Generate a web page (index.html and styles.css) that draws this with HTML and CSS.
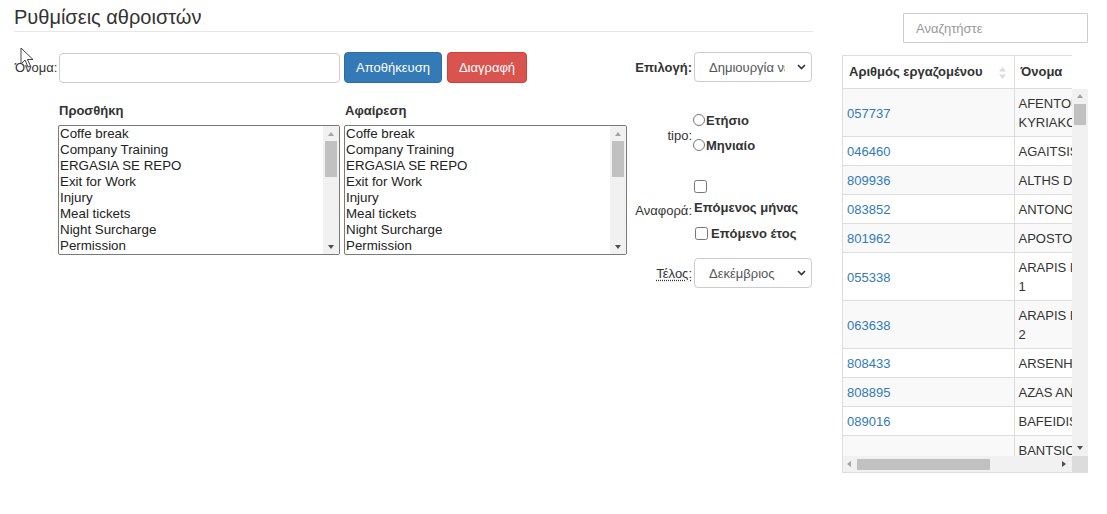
FILE: index.html
```html
<!DOCTYPE html>
<html lang="el">
<head>
<meta charset="utf-8">
<title>Ρυθμίσεις αθροιστών</title>
<link rel="stylesheet" href="styles.css">
</head>
<body>
<div class="page">
  <main class="main">
    <h1 class="title">Ρυθμίσεις αθροιστών</h1>
    <div class="content">
      <div class="left">
        <div class="name-row">
          <label class="name-label" for="name">Όνομα:</label>
          <input id="name" class="text-input" type="text">
          <button class="btn btn-primary">Αποθήκευση</button>
          <button class="btn btn-danger">Διαγραφή</button>
        </div>
        <div class="lists">
          <div class="list-group">
            <div class="list-title">Προσθήκη</div>
            <div class="listbox">
              <div class="list-items">
                <div>Coffe break</div>
                <div>Company Training</div>
                <div>ERGASIA SE REPO</div>
                <div>Exit for Work</div>
                <div>Injury</div>
                <div>Meal tickets</div>
                <div>Night Surcharge</div>
                <div>Permission</div>
              </div>
              <div class="list-scroll">
                <span class="arr arr-up"></span>
                <span class="list-thumb"></span>
                <span class="arr arr-down"></span>
              </div>
            </div>
          </div>
          <div class="list-group">
            <div class="list-title">Αφαίρεση</div>
            <div class="listbox wide">
              <div class="list-items">
                <div>Coffe break</div>
                <div>Company Training</div>
                <div>ERGASIA SE REPO</div>
                <div>Exit for Work</div>
                <div>Injury</div>
                <div>Meal tickets</div>
                <div>Night Surcharge</div>
                <div>Permission</div>
              </div>
              <div class="list-scroll">
                <span class="arr arr-up"></span>
                <span class="list-thumb"></span>
                <span class="arr arr-down"></span>
              </div>
            </div>
          </div>
        </div>
      </div>
      <div class="right">
        <div class="field">
          <label class="field-label bold">Επιλογή:</label>
          <div class="select-wrap">
            <select class="select"><option>Δημιουργία νέου</option></select>
            <svg class="chev" width="9" height="6" viewBox="0 0 9 6"><path d="M1 1l3.5 3.5L8 1" fill="none" stroke="#333" stroke-width="1.6"/></svg>
          </div>
        </div>
        <div class="field field-tipo">
          <span class="field-label">tipo:</span>
          <div class="radios">
            <label class="radio"><input type="radio" name="tipo">Ετήσιο</label>
            <label class="radio second"><input type="radio" name="tipo">Μηνιαίο</label>
          </div>
        </div>
        <div class="field field-ref">
          <span class="field-label">Αναφορά:</span>
          <div class="checks">
            <label class="check stacked"><input type="checkbox"><span>Επόμενος μήνας</span></label>
            <label class="check inline"><input type="checkbox"><span>Επόμενο έτος</span></label>
          </div>
        </div>
        <div class="field field-end">
          <abbr class="field-label" title="Τέλος">Τέλος:</abbr>
          <div class="select-wrap">
            <select class="select"><option>Δεκέμβριος</option></select>
            <svg class="chev" width="9" height="6" viewBox="0 0 9 6"><path d="M1 1l3.5 3.5L8 1" fill="none" stroke="#333" stroke-width="1.6"/></svg>
          </div>
        </div>
      </div>
    </div>
  </main>

  <aside class="side">
    <input class="search" type="search" placeholder="Αναζητήστε">
    <div class="grid">
      <div class="grid-head">
        <table class="tbl">
          <colgroup><col class="c1"><col class="c2"></colgroup>
          <thead>
            <tr>
              <th>
                <span>Αριθμός εργαζομένου</span>
                <svg class="sort" width="7" height="12" viewBox="0 0 7 12"><path d="M3.5 0L7 4.5H0z" fill="#dcdcdc"/><path d="M3.5 12L7 7.5H0z" fill="#dcdcdc"/></svg>
              </th>
              <th>Όνομα</th>
            </tr>
          </thead>
        </table>
      </div>
      <div class="grid-body">
        <div class="clip">
          <table class="tbl">
            <colgroup><col class="c1"><col class="c2"></colgroup>
            <tbody>
              <tr><td><a href="#">057737</a></td><td>AFENTOULIS<br>KYRIAKOS</td></tr>
              <tr><td><a href="#">046460</a></td><td>AGAITSIS GEORGIOS</td></tr>
              <tr><td><a href="#">809936</a></td><td>ALTHS DIMITRIOS</td></tr>
              <tr><td><a href="#">083852</a></td><td>ANTONOPOULOS NIKOS</td></tr>
              <tr><td><a href="#">801962</a></td><td>APOSTOLOU MARIA</td></tr>
              <tr><td><a href="#">055338</a></td><td>ARAPIS IOANNIS<br>1</td></tr>
              <tr><td><a href="#">063638</a></td><td>ARAPIS IOANNIS<br>2</td></tr>
              <tr><td><a href="#">808433</a></td><td>ARSENHS PETROS</td></tr>
              <tr><td><a href="#">808895</a></td><td>AZAS ANDREAS</td></tr>
              <tr><td><a href="#">089016</a></td><td>BAFEIDIS KOSTAS</td></tr>
              <tr><td><a href="#"></a></td><td>BANTSIOS<br>ELENI</td></tr>
            </tbody>
          </table>
        </div>
        <div class="vscroll">
          <span class="arr arr-up"></span>
          <span class="vthumb"></span>
          <span class="arr arr-down"></span>
        </div>
      </div>
      <div class="grid-foot">
        <div class="hscroll">
          <span class="arr arr-left"></span>
          <span class="hthumb"></span>
          <span class="arr arr-right"></span>
        </div>
        <div class="corner"></div>
      </div>
    </div>
  </aside>
</div>

<svg class="cursor" width="14" height="22" viewBox="0 0 14 22"><path d="M1 1v16l4-4 3 7 2.5-1-3-6.5H13z" fill="#fff" stroke="#444" stroke-width="1" stroke-linejoin="round"/></svg>
</body>
</html>
```
FILE: styles.css
```css
* { box-sizing: border-box; }

body {
  margin: 0;
  font-family: "Liberation Sans", Arial, sans-serif;
  font-size: 13px;
  color: #333;
  background: #fff;
}

.page {
  display: flex;
  align-items: flex-start;
  gap: 29px;
  padding-left: 14px;
}

.main { width: 799px; flex: none; }

.title {
  margin: 0;
  padding: 6px 0 3px;
  font-size: 20px;
  font-weight: normal;
  line-height: 22px;
  color: #333;
  border-bottom: 1px solid #e8e8e8;
}

.content {
  display: flex;
  margin-top: 20px;
}

.left { width: 616px; flex: none; }
.right { width: 183px; flex: none; }

/* name row */
.name-row {
  display: flex;
  align-items: center;
  height: 31px;
}

.name-label {
  width: 45px;
  padding-left: 1px;
  font-size: 13px;
}

.text-input {
  width: 281px;
  height: 30px;
  border: 1px solid #ccc;
  border-radius: 4px;
  font-family: inherit;
}

.btn {
  height: 31px;
  border-radius: 4px;
  color: #fff;
  font-family: inherit;
  font-size: 13px;
  padding: 0;
}

.btn-primary {
  width: 98px;
  margin-left: 4px;
  background: #337ab7;
  border: 1px solid #2e6da4;
}

.btn-danger {
  width: 80px;
  margin-left: 5px;
  background: #d9534f;
  border: 1px solid #d43f3a;
}

/* lists */
.lists {
  display: flex;
  gap: 4px;
  margin-left: 44px;
  margin-top: 20px;
}

.list-title {
  font-weight: bold;
  line-height: 16px;
  padding-left: 1px;
  margin-bottom: 6px;
}

.listbox {
  display: flex;
  width: 282px;
  height: 130px;
  border: 1px solid #7a7a7a;
  border-radius: 2px;
  overflow: hidden;
}

.listbox.wide { width: 283px; }

.list-items {
  flex: 1;
  padding-left: 1px;
  font-size: 13.33px;
  line-height: 16px;
  color: #222;
}

.list-scroll {
  width: 16px;
  background: #f1f1f1;
  display: flex;
  flex-direction: column;
  align-items: center;
}

.list-thumb {
  width: 12px;
  height: 36px;
  margin-top: 1px;
  background: #c1c1c1;
}

.arr {
  display: block;
  width: 0;
  height: 0;
  border-style: solid;
  border-color: transparent;
}

.arr-up {
  margin: 6px 0 4px;
  border-width: 0 3.5px 4px;
  border-bottom-color: #a3a3a3;
}

.arr-down {
  margin-top: auto;
  margin-bottom: 5px;
  border-width: 4px 3.5px 0;
  border-top-color: #505050;
}

.arr-left {
  border-width: 3.5px 4px 3.5px 0;
  border-right-color: #a3a3a3;
}

.arr-right {
  border-width: 3.5px 0 3.5px 4px;
  border-left-color: #505050;
}

/* right fields */
.field {
  display: flex;
  align-items: center;
}

.field-label {
  width: 63px;
  padding-right: 1px;
  text-align: right;
  font-size: 13px;
  flex: none;
}

.bold { font-weight: bold; }

abbr.field-label {
  text-decoration: underline dotted;
  text-underline-offset: 2px;
  cursor: help;
}

.select-wrap {
  position: relative;
  width: 118px;
  height: 30px;
  margin-left: 1px;
  flex: none;
}

.select {
  appearance: none;
  -webkit-appearance: none;
  width: 100%;
  height: 100%;
  padding: 0 26px 0 14px;
  border: 1px solid #ccc;
  border-radius: 4px;
  background: #fff;
  color: #555;
  font-family: inherit;
  font-size: 13px;
}

.chev {
  position: absolute;
  right: 6px;
  top: 12px;
  pointer-events: none;
}

.field-tipo { margin-top: 30px; }
.field-tipo .field-label { padding-top: 4px; }

.radios {
  display: flex;
  flex-direction: column;
  margin-left: 0;
}

.radio {
  display: block;
  line-height: 18px;
  font-weight: bold;
}

.radio.second { margin-top: 7px; }

.radio input {
  width: 12px;
  height: 12px;
  margin: 0 1px 0 0;
  vertical-align: -1px;
}

.field-ref { margin-top: 21px; }

.checks { margin-left: 1px; }

.check {
  display: block;
  font-weight: bold;
  line-height: 21px;
}

.check input {
  width: 13px;
  height: 13px;
  margin: 0;
  vertical-align: -2px;
}

.check.stacked span { display: block; }

.check.inline { margin-top: 5px; }

.check.inline input { margin: 0 3px 0 1px; }

.field-end { margin-top: 14px; }

/* side table */
.side { width: 246px; flex: none; }

.search {
  display: block;
  width: 185px;
  height: 30px;
  margin: 13px 0 0 61px;
  padding: 0 12px;
  border: 1px solid #ccc;
  border-radius: 1px;
  font-family: inherit;
  font-size: 13px;
}

.search::placeholder { color: #999; }

.grid {
  margin-top: 12px;
  border-left: 1px solid #ddd;
  border-bottom: 1px solid #ddd;
}

.grid-head {
  width: 229px;
  overflow: hidden;
}

.tbl {
  border-collapse: collapse;
  table-layout: fixed;
  width: 400px;
}

.c1 { width: 171px; }
.c2 { width: 229px; }

.tbl th {
  position: relative;
  text-align: left;
  font-weight: bold;
  line-height: 18px;
  padding: 7px 7px 7px 6px;
  border-top: 1px solid #ddd;
  border-bottom: 1px solid #ddd;
  border-right: 1px solid #ddd;
  white-space: nowrap;
}

.sort {
  position: absolute;
  right: 8px;
  top: 11px;
}

.grid-body {
  display: flex;
  height: 367px;
}

.clip {
  width: 229px;
  overflow: hidden;
}

.tbl td {
  padding: 5px 6px 4px 4px;
  line-height: 19px;
  vertical-align: middle;
  border-bottom: 1px solid #ddd;
  border-right: 1px solid #ddd;
  white-space: nowrap;
}

.tbl tbody tr:nth-child(odd) td { background: #f9f9f9; }

.tbl a {
  color: #337ab7;
  text-decoration: none;
}

.vscroll {
  width: 16px;
  background: #f1f1f1;
  display: flex;
  flex-direction: column;
  align-items: center;
}

.vthumb {
  width: 12px;
  height: 21px;
  background: #c1c1c1;
}

.vscroll .arr-up { margin: 5px 0 6px; }
.vscroll .arr-down { margin-bottom: 6px; }

.grid-foot {
  display: flex;
  height: 16px;
}

.hscroll {
  width: 229px;
  background: #f1f1f1;
  display: flex;
  align-items: center;
  padding: 0 6px 0 4px;
}

.hthumb {
  width: 133px;
  height: 11px;
  margin-left: 6px;
  background: #c1c1c1;
}

.hscroll .arr-right { margin-left: auto; }

.corner {
  width: 16px;
  background: #dcdcdc;
}

.cursor {
  position: absolute;
  left: 20px;
  top: 47px;
}
```
